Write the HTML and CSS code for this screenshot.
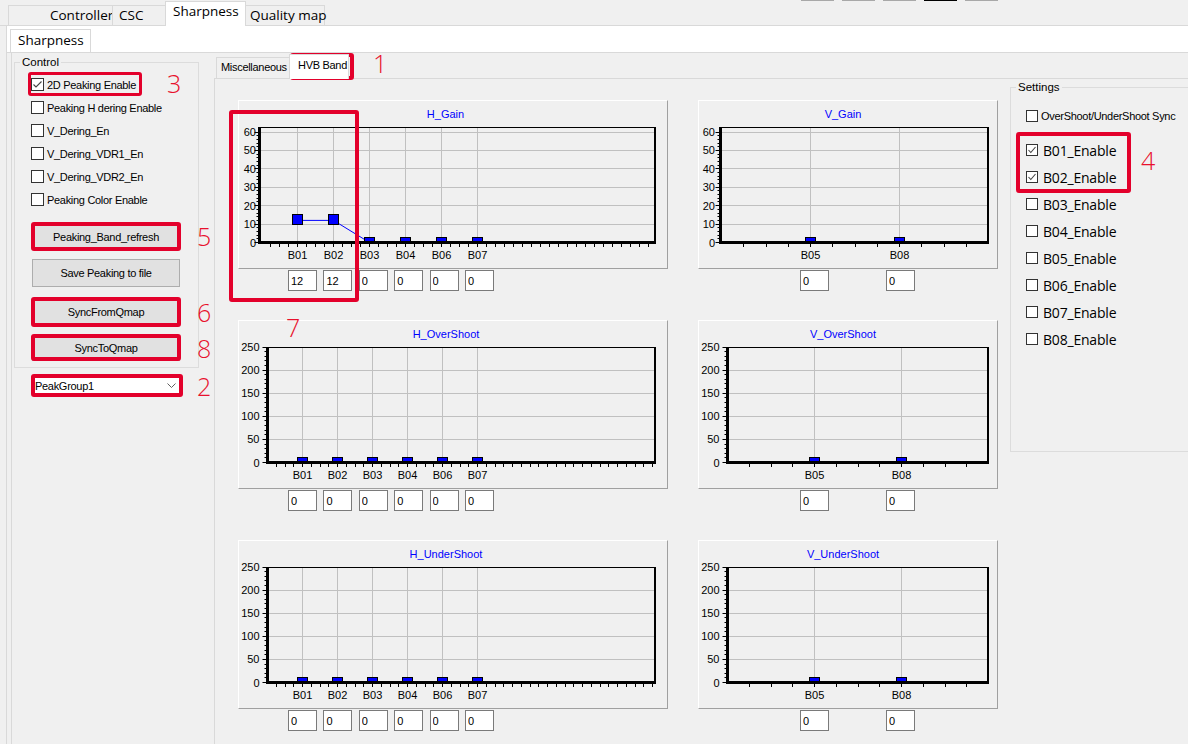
FILE: index.html
```html
<!DOCTYPE html>
<html lang="en">
<head>
<meta charset="utf-8">
<title>Sharpness</title>
<link rel="stylesheet" href="styles.css">
</head>
<body>
<div class="app">
  <div class="main-tabs">
    <div class="tab tab-controller">Controller</div>
    <div class="tab tab-csc">CSC</div>
    <div class="tab tab-sharp is-active">Sharpness</div>
    <div class="tab tab-qmap">Quality map</div>
    <div class="strip-marks"><i></i><i></i><i></i><i class="dark"></i><i></i></div>
  </div>

  <div class="main-page">
    <div class="sub-tabs"><div class="sub-tab">Sharpness</div></div>

    <div class="sub-page">
      <div class="left-col">
        <fieldset class="group control">
          <legend>Control</legend>
          <div class="group-body">
            <label class="check"><span class="box on"><svg viewBox="0 0 11 11"><polyline points="1.5,5.5 4,8 9.5,2.5"/></svg></span>2D Peaking Enable</label>
            <label class="check"><span class="box"></span>Peaking H dering Enable</label>
            <label class="check"><span class="box"></span>V_Dering_En</label>
            <label class="check"><span class="box"></span>V_Dering_VDR1_En</label>
            <label class="check"><span class="box"></span>V_Dering_VDR2_En</label>
            <label class="check"><span class="box"></span>Peaking Color Enable</label>
            <button class="btn btn-refresh">Peaking_Band_refresh</button>
            <button class="btn btn-save">Save Peaking to file</button>
            <button class="btn btn-from">SyncFromQmap</button>
            <button class="btn btn-to">SyncToQmap</button>
          </div>
        </fieldset>
        <div class="combo"><span>PeakGroup1</span><svg class="chev" viewBox="0 0 9 5"><polyline points="0.5,0.5 4.5,4.5 8.5,0.5"/></svg></div>
      </div>

      <div class="band">
        <div class="band-tabs">
          <div class="btab">Miscellaneous</div>
          <div class="btab is-active">HVB Band</div>
        </div>
        <div class="band-page">
          <div class="charts">
            <div class="unit">
              <div class="chart-box wide"><svg class="chart" width="428" height="167" data-title="H_Gain" data-tx="206.5" data-max="60" data-step="10" data-ytop="31" data-axis="20.5" data-lab="17" data-right="416" data-cats="B01,B02,B03,B04,B06,B07" data-xs="58.5,94.5,130.5,166.5,202.5,238.5" data-values="12,12,0,0,0,0"></svg></div>
              <div class="vals wide"><input value="12"><input value="12"><input value="0"><input value="0"><input value="0"><input value="0"></div>
            </div>
            <div class="unit">
              <div class="chart-box narrow"><svg class="chart" width="298" height="167" data-title="V_Gain" data-tx="144" data-max="60" data-step="10" data-ytop="31" data-axis="21.5" data-lab="16" data-right="289" data-cats="B05,B08" data-xs="111.5,200.5" data-values="0,0"></svg></div>
              <div class="vals narrow"><input value="0"><input value="0"></div>
            </div>
            <div class="unit">
              <div class="chart-box wide"><svg class="chart" width="428" height="167" data-title="H_OverShoot" data-tx="207" data-max="250" data-step="50" data-ytop="26" data-axis="28.5" data-lab="20.5" data-right="416" data-cats="B01,B02,B03,B04,B06,B07" data-xs="63.5,98.5,133.5,168.5,203.5,238.5" data-values="0,0,0,0,0,0"></svg></div>
              <div class="vals wide"><input value="0"><input value="0"><input value="0"><input value="0"><input value="0"><input value="0"></div>
            </div>
            <div class="unit">
              <div class="chart-box narrow"><svg class="chart" width="298" height="167" data-title="V_OverShoot" data-tx="144" data-max="250" data-step="50" data-ytop="26" data-axis="28.5" data-lab="20.5" data-right="289" data-cats="B05,B08" data-xs="115.5,202.5" data-values="0,0"></svg></div>
              <div class="vals narrow"><input value="0"><input value="0"></div>
            </div>
            <div class="unit">
              <div class="chart-box wide"><svg class="chart" width="428" height="167" data-title="H_UnderShoot" data-tx="207" data-max="250" data-step="50" data-ytop="26" data-axis="28.5" data-lab="20.5" data-right="416" data-cats="B01,B02,B03,B04,B06,B07" data-xs="63.5,98.5,133.5,168.5,203.5,238.5" data-values="0,0,0,0,0,0"></svg></div>
              <div class="vals wide"><input value="0"><input value="0"><input value="0"><input value="0"><input value="0"><input value="0"></div>
            </div>
            <div class="unit">
              <div class="chart-box narrow"><svg class="chart" width="298" height="167" data-title="V_UnderShoot" data-tx="144" data-max="250" data-step="50" data-ytop="26" data-axis="28.5" data-lab="20.5" data-right="289" data-cats="B05,B08" data-xs="115.5,202.5" data-values="0,0"></svg></div>
              <div class="vals narrow"><input value="0"><input value="0"></div>
            </div>
          </div>

          <fieldset class="group settings">
            <legend>Settings</legend>
            <div class="group-body">
              <label class="check sync"><span class="box sm"></span>OverShoot/UnderShoot Sync</label>
              <div class="band-list">
                <label class="check big"><span class="box sm on"><svg viewBox="0 0 10 10"><polyline points="1.5,5 3.8,7.5 8.5,2"/></svg></span>B01_Enable</label>
                <label class="check big"><span class="box sm on"><svg viewBox="0 0 10 10"><polyline points="1.5,5 3.8,7.5 8.5,2"/></svg></span>B02_Enable</label>
                <label class="check big"><span class="box sm"></span>B03_Enable</label>
                <label class="check big"><span class="box sm"></span>B04_Enable</label>
                <label class="check big"><span class="box sm"></span>B05_Enable</label>
                <label class="check big"><span class="box sm"></span>B06_Enable</label>
                <label class="check big"><span class="box sm"></span>B07_Enable</label>
                <label class="check big"><span class="box sm"></span>B08_Enable</label>
              </div>
            </div>
          </fieldset>
        </div>
      </div>
    </div>
  </div>

  <!-- callout frames and step numbers -->
  <div class="mark m-hvb"></div>
  <div class="mark m-2d"></div>
  <div class="mark m-refresh"></div>
  <div class="mark m-from"></div>
  <div class="mark m-to"></div>
  <div class="mark m-combo"></div>
  <div class="mark m-bands"></div>
  <div class="mark m-axis"></div>
  <div class="num n1">1</div>
  <div class="num n2">2</div>
  <div class="num n3">3</div>
  <div class="num n4">4</div>
  <div class="num n5">5</div>
  <div class="num n6">6</div>
  <div class="num n7">7</div>
  <div class="num n8">8</div>
</div>
<script src="charts.js"></script>
</body>
</html>
```

FILE: styles.css
```css
* { box-sizing: border-box; }
html, body { margin: 0; padding: 0; }
body {
  background: #f0f0f0;
  overflow: hidden;
  font-family: "Liberation Sans", Arial, sans-serif;
  font-size: 11px;
  color: #000;
}
.app { position: relative; width: 1188px; height: 744px; overflow: hidden; }

/* top tab strip */
.main-tabs {
  display: flex;
  align-items: flex-end;
  height: 26px;
  padding-left: 8px;
  border-bottom: 1px solid #d9d9d9;
  font-family: "Open Sans", sans-serif;
  font-size: 13.5px;
}
.tab {
  height: 20px;
  border: 1px solid #d9d9d9;
  border-bottom: 0;
  background: #f0f0f0;
  line-height: 19px;
  white-space: nowrap;
  margin-left: -1px;
}
.tab-controller { width: 105px; padding-left: 41px; margin-left: 0; }
.tab-csc { width: 54px; padding-left: 6px; }
.tab-sharp { width: 81px; padding-left: 7px; }
.tab-qmap { width: 80px; padding-left: 4px; }
.tab.is-active {
  height: 25px;
  margin-bottom: -1px;
  background: #fff;
  position: relative;
  z-index: 1;
  line-height: 19px;
}
.strip-marks { align-self: flex-start; display: flex; gap: 8px; margin-left: 476px; }
.strip-marks i { display: block; width: 33px; height: 1px; background: #a8a8a8; }
.strip-marks i.dark { background: #000; }

/* outer page */
.main-page { margin-left: 6px; border-left: 1px solid #d9d9d9; height: 718px; }
.sub-tabs {
  height: 27px;
  background: #fff;
  border-bottom: 1px solid #d9d9d9;
  padding: 3px 0 0 3px;
  font-family: "Open Sans", sans-serif;
  font-size: 13.5px;
}
.sub-tab {
  width: 81px;
  height: 23px;
  border: 1px solid #d9d9d9;
  border-bottom: 0;
  padding-left: 7px;
  line-height: 20px;
  background: #fff;
}
.sub-page {
  display: flex;
  margin-left: 4px;
  border-left: 1px solid #d9d9d9;
  height: 691px;
}

/* group boxes */
.group {
  margin: 0;
  padding: 0;
  border: 1px solid #dcdcdc;
  min-width: 0;
}
.group legend {
  margin-left: 5px;
  padding: 0 2px;
  line-height: 14px;
  font-size: 11.5px;
}

/* left control column */
.left-col { width: 202px; flex: none; }
.control {
  margin: 2px 0 0 2px;
  width: 185px;
  height: 313px;
}
.control .group-body { padding-left: 16px; padding-top: 4px; }
.check {
  display: flex;
  align-items: center;
  height: 23px;
  white-space: nowrap;
  letter-spacing: -0.3px;
}
.box {
  flex: none;
  width: 13px;
  height: 13px;
  border: 1px solid #333;
  background: #fff;
  margin-right: 3px;
  display: flex;
}
.box svg { width: 100%; height: 100%; }
.box polyline { fill: none; stroke: #444; stroke-width: 1.1; }
.box.sm { width: 12px; height: 12px; }

.btn {
  display: block;
  width: 148px;
  margin-left: 1px;
  border: 1px solid #adadad;
  background: #e1e1e1;
  font-family: "Liberation Sans", Arial, sans-serif;
  font-size: 11px;
  letter-spacing: -0.3px;
  color: #000;
  padding: 0;
}
.btn-refresh { margin-top: 12px; height: 27px; }
.btn-save { margin-top: 9px; height: 28px; }
.btn-from { margin-top: 11px; height: 28px; }
.btn-to { margin-top: 9px; height: 26px; }

.combo {
  display: flex;
  align-items: center;
  justify-content: space-between;
  margin: 7px 0 0 20px;
  width: 150px;
  height: 21px;
  background: #fff;
  border: 1px solid #7a7a7a;
  padding: 0 5px 0 2px;
  letter-spacing: -0.3px;
}
.chev { width: 9px; height: 5px; }
.chev polyline { fill: none; stroke: #606060; stroke-width: 1; }

/* band tab control */
.band { flex: 1; }
.band-tabs {
  display: flex;
  align-items: flex-end;
  height: 25px;
  padding-left: 2px;
  letter-spacing: -0.3px;
}
.btab {
  height: 21px;
  border: 1px solid #d9d9d9;
  border-bottom: 0;
  padding-left: 4px;
  width: 74px;
  line-height: 19px;
  white-space: nowrap;
}
.btab.is-active {
  margin-left: -1px;
  width: 60px;
  height: 25px;
  margin-bottom: -1px;
  padding: 1px 0 0 8px;
  background: #fff;
  position: relative;
  z-index: 1;
}
.band-page {
  display: flex;
  align-items: flex-start;
  border-top: 1px solid #d9d9d9;
  border-left: 1px solid #d9d9d9;
  height: 666px;
}
.charts {
  display: grid;
  grid-template-columns: 430px 300px;
  column-gap: 30px;
  row-gap: 29px;
  padding: 21px 0 0 23px;
}
.chart-box {
  height: 169px;
  border: 1px solid;
  border-color: #fff #a0a0a0 #a0a0a0 #fff;
}
.chart { display: block; }
.chart text { font-family: "Liberation Sans", Arial, sans-serif; font-size: 11px; fill: #000; }
.chart text.title { fill: #0000ff; text-anchor: middle; }
.chart text.ylab { text-anchor: end; }
.chart text.xlab { text-anchor: middle; }
.chart .grid { stroke: #c0c0c0; stroke-width: 1; }
.chart .trace { fill: none; stroke: #0000ff; stroke-width: 1; }
.chart .pt { fill: #0000ff; stroke: #000; stroke-width: 1; }
.chart .frame { stroke: #000; stroke-width: 1; }
.chart .frame-r { stroke: #000; stroke-width: 2; }
.chart .frame-axis { stroke: #000; stroke-width: 3; }
.chart .tick { stroke: #000; stroke-width: 1; }

.vals { display: flex; margin-top: 1px; height: 21px; }
.vals.wide { padding-left: 50px; gap: 6.4px; }
.vals.narrow { padding-left: 102px; gap: 57px; }
.vals input {
  width: 29px;
  height: 21px;
  margin: 0;
  padding: 0 0 0 2px;
  border: 1px solid #7a7a7a;
  border-radius: 0;
  background: #fff;
  font-family: "Liberation Sans", Arial, sans-serif;
  font-size: 11px;
  color: #000;
  outline: none;
}

/* settings group */
.settings {
  margin: 1px 0 0 12px;
  width: 200px;
  height: 372px;
  flex: none;
}
.settings .group-body { padding-left: 15px; }
.sync { height: 20px; margin-top: 12px; }
.band-list { margin-top: 10.5px; }
.check.big {
  height: 27px;
  font-family: "Open Sans", sans-serif;
  font-size: 14px;
  letter-spacing: -0.2px;
}
.check.big .box { margin-right: 5px; }

/* callouts */
.mark {
  position: absolute;
  border: 4px solid #e3002b;
  border-radius: 3px;
  pointer-events: none;
}
.m-hvb { left: 290px; top: 53px; width: 64px; height: 27px; }
.m-2d { left: 28px; top: 72px; width: 114px; height: 24px; border-width: 3.5px; }
.m-refresh { left: 31px; top: 222px; width: 150px; height: 29px; }
.m-from { left: 31px; top: 297px; width: 150px; height: 30px; }
.m-to { left: 31px; top: 334px; width: 150px; height: 27px; }
.m-combo { left: 31px; top: 374px; width: 152px; height: 23px; }
.m-bands { left: 1016px; top: 132px; width: 115px; height: 61px; }
.m-axis { left: 229px; top: 110px; width: 130px; height: 192px; }

.num {
  position: absolute;
  font-family: "Open Sans", sans-serif;
  font-weight: 300;
  font-size: 25px;
  line-height: 25px;
  color: #e8112d;
}
.n1 { left: 373px; top: 51px; }
.n2 { left: 197px; top: 374px; }
.n3 { left: 167px; top: 71px; }
.n4 { left: 1141px; top: 148px; }
.n5 { left: 197px; top: 224px; }
.n6 { left: 197px; top: 300px; }
.n7 { left: 286px; top: 315px; }
.n8 { left: 197px; top: 336px; }
```

FILE: charts.js
```js
// Draws the band charts: grid, series, frame, ticks and labels from data-* settings.
(function () {
  var NS = 'http://www.w3.org/2000/svg';
  var TOP = 26.5, BOTTOM = 141.5;

  function add(parent, tag, attrs, text) {
    var node = document.createElementNS(NS, tag);
    for (var k in attrs) node.setAttribute(k, attrs[k]);
    if (text != null) node.textContent = text;
    parent.appendChild(node);
    return node;
  }
  function px(v) { return Math.round(v - 0.5) + 0.5; }

  document.querySelectorAll('svg.chart').forEach(function (svg, idx) {
    var d = svg.dataset;
    var max = +d.max, step = +d.step, axis = +d.axis, right = +d.right;
    var ytop = +d.ytop, lab = +d.lab;
    var cats = d.cats.split(',');
    var xs = d.xs.split(',').map(Number);
    var vals = d.values.split(',').map(Number);
    function y(v) { return BOTTOM - v * (BOTTOM - ytop) / max; }

    add(svg, 'text', { x: d.tx, y: 17, 'class': 'title' }, d.title);

    // grid
    for (var v = step; v <= max; v += step) {
      var gy = px(y(v));
      add(svg, 'line', { x1: axis, x2: right, y1: gy, y2: gy, 'class': 'grid' });
    }
    xs.forEach(function (x) {
      add(svg, 'line', { x1: x, x2: x, y1: TOP, y2: BOTTOM, 'class': 'grid' });
    });

    // series, clipped to the plot area
    var defs = add(svg, 'defs', {});
    var clip = add(defs, 'clipPath', { id: 'plot' + idx });
    add(clip, 'rect', { x: axis, y: TOP, width: right - axis, height: BOTTOM - TOP });
    var series = add(svg, 'g', { 'clip-path': 'url(#plot' + idx + ')' });
    add(series, 'polyline', {
      points: xs.map(function (x, i) { return x + ',' + y(vals[i]); }).join(' '),
      'class': 'trace'
    });
    xs.forEach(function (x, i) {
      var cy = Math.round(y(vals[i]));
      add(series, 'rect', { x: x - 5, y: cy - 5.5, width: 10, height: 10, 'class': 'pt' });
    });

    // frame
    add(svg, 'line', { x1: axis, x2: right, y1: TOP, y2: TOP, 'class': 'frame' });
    add(svg, 'line', { x1: right, x2: right, y1: TOP - 0.5, y2: BOTTOM, 'class': 'frame-r' });
    add(svg, 'line', { x1: axis, x2: axis, y1: TOP - 0.5, y2: BOTTOM + 1.5, 'class': 'frame-axis' });
    add(svg, 'line', { x1: axis - 1.5, x2: right + 1, y1: BOTTOM, y2: BOTTOM, 'class': 'frame-axis' });

    // y ticks and labels
    var minor = step / 5;
    for (var t = 0; t <= max + 0.001; t += minor) {
      var ty = px(y(t));
      var major = Math.abs(t / step - Math.round(t / step)) < 0.001;
      add(svg, 'line', { x1: axis - (major ? 5 : 3), x2: axis, y1: ty, y2: ty, 'class': 'tick' });
      if (major) add(svg, 'text', { x: lab, y: Math.round(y(t)) + 4, 'class': 'ylab' }, String(Math.round(t)));
    }

    // x ticks
    var q = (xs[1] - xs[0]) / 4;
    var start = xs[0];
    while (start - q > axis + 2) start -= q;
    for (var tx = start; tx < right - 2; tx += q) {
      var sx = px(tx);
      add(svg, 'line', { x1: sx, x2: sx, y1: BOTTOM + 1.5, y2: BOTTOM + 4.5, 'class': 'tick' });
    }

    // category labels
    xs.forEach(function (x, i) {
      add(svg, 'text', { x: x, y: 158, 'class': 'xlab' }, cats[i]);
    });
  });
})();
```
